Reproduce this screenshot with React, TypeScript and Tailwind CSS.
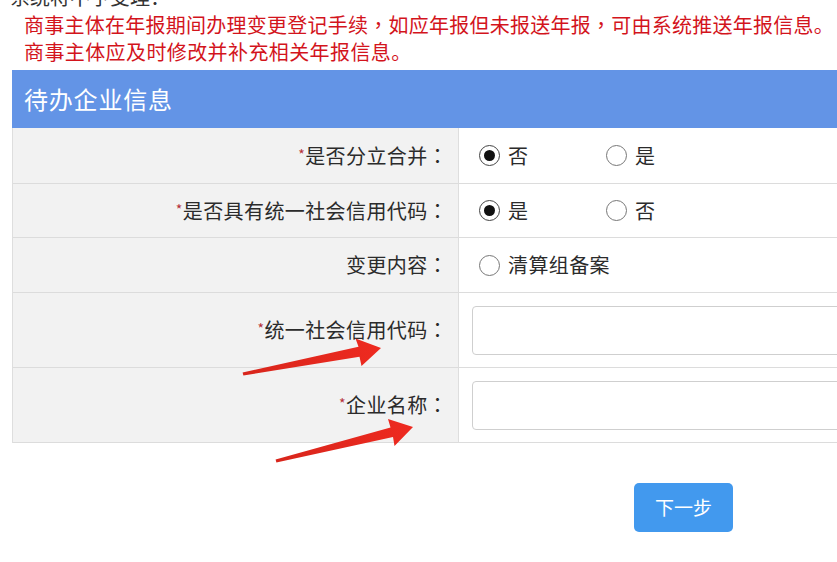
import React from "react";

const FONT = { fontFamily: '"Noto Sans CJK SC", "Noto Sans", sans-serif' };
const TC = { fontFamily: '"Noto Sans CJK TC", "Noto Sans CJK SC", sans-serif' };

function Radio({ checked }: { checked?: boolean }) {
  return (
    <span
      className={
        "inline-flex h-[21px] w-[21px] shrink-0 items-center justify-center rounded-full border-[1.5px] bg-white " +
        (checked ? "border-[#444]" : "border-[#777]")
      }
    >
      {checked && <span className="h-[11px] w-[11px] rounded-full bg-[#111]" />}
    </span>
  );
}

function Opt({ label, checked, wide }: { label: string; checked?: boolean; wide?: boolean }) {
  return (
    <span className={"flex items-center gap-[8px] " + (wide ? "w-[127px]" : "")}>
      <Radio checked={checked} />
      <span className="text-[20px] leading-none tracking-[0.4px] text-[#2b2b2b]">{label}</span>
    </span>
  );
}

function Label({ text, req }: { text: string; req?: boolean }) {
  return (
    <div className="flex items-center justify-end border-r border-[#dedede] bg-[#f2f2f2] pr-[10px]">
      <span className="text-[20px] leading-none tracking-[0.4px] text-[#2b2b2b]">
        {req && <span className="relative -top-[4px] text-[14px] text-[#b5303a]">*</span>}
        {text}
        <span style={TC}>：</span>
      </span>
    </div>
  );
}

export default function App() {
  return (
    <div className="relative h-[562px] w-[837px] overflow-hidden bg-white" style={FONT}>
      <div className="h-[9px] overflow-hidden pl-[10px]">
        <div className="-mt-[13px] text-[20px] leading-[20px] text-[#333]">系统将不予受理：</div>
      </div>
      <div className="whitespace-nowrap pl-[24px] pt-[2px] text-[20px] leading-[27px] text-[#d3141c]">
        <div className="tracking-[0.25px]">
          商事主体在年报期间办理变更登记手续<span style={TC}>，</span>如应年报但未报送年报<span style={TC}>，</span>可由系统推送年报信息。
        </div>
        <div className="tracking-[0.4px]">商事主体应及时修改并补充相关年报信息。</div>
      </div>
      <div className="ml-[12px] mt-[5px] flex h-[58px] items-center bg-[#6394e6] pl-[12px] text-[24px] tracking-[0.8px] text-white">
        待办企业信息
      </div>
      <div className="ml-[12px] grid grid-cols-[446px_1fr] border-l border-[#dedede] [&>div]:border-b [&>div]:border-b-[#dcdcdc]">
        <Label text="是否分立合并" req />
        <div className="flex h-[56px] items-center pl-[20px]">
          <Opt label="否" checked wide />
          <Opt label="是" />
        </div>
        <Label text="是否具有统一社会信用代码" req />
        <div className="flex h-[54px] items-center pl-[20px]">
          <Opt label="是" checked wide />
          <Opt label="否" />
        </div>
        <Label text="变更内容" />
        <div className="flex h-[55px] items-center pl-[20px]">
          <Opt label="清算组备案" />
        </div>
        <Label text="统一社会信用代码" req />
        <div className="flex h-[75px] items-center overflow-hidden pl-[13px]">
          <div className="h-[49px] w-[420px] shrink-0 rounded-[4px] border border-[#cfcfcf] bg-white" />
        </div>
        <Label text="企业名称" req />
        <div className="flex h-[75px] items-center overflow-hidden pl-[13px]">
          <div className="h-[49px] w-[420px] shrink-0 rounded-[4px] border border-[#cfcfcf] bg-white" />
        </div>
      </div>
      <div className="mt-[40px] flex pl-[634px]">
        <button className="flex h-[49px] w-[99px] items-center justify-center rounded-[5px] bg-[#4299ee] text-[19px] text-white">
          下一步
        </button>
      </div>
      <svg className="pointer-events-none absolute left-0 top-0" width="837" height="562" viewBox="0 0 837 562">
        <defs>
          <linearGradient id="ar" x1="0" y1="0" x2="1" y2="0">
            <stop offset="0" stopColor="#d8261c" />
            <stop offset="1" stopColor="#ee2a20" />
          </linearGradient>
        </defs>
        <polygon
          points="242.6,372.5 358.5,346.8 355.5,338.5 381,348 361.5,366 359.5,356.8 243.4,375.5"
          fill="url(#ar)"
        />
        <polygon
          points="275.6,459.5 390.5,427.5 388,419 413,427 394.5,446 393,437 276.4,462.5"
          fill="url(#ar)"
        />
      </svg>
    </div>
  );
}
